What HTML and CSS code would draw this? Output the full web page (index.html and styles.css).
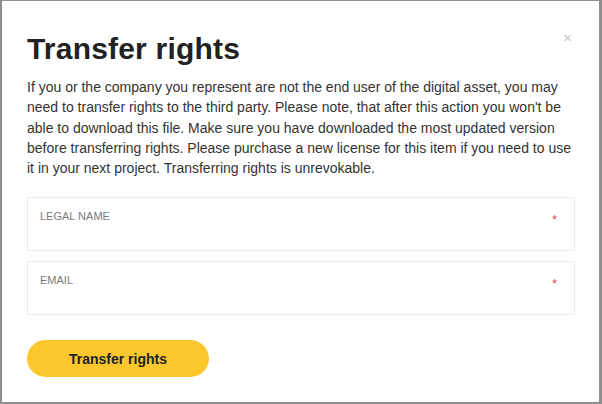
FILE: index.html
```html
<!DOCTYPE html>
<html lang="en">
<head>
  <meta charset="UTF-8">
  <title>Transfer rights</title>
  <link rel="stylesheet" href="styles.css">
</head>
<body>

  <div class="modal">
    <button class="close" aria-label="Close">&times;</button>
    <h2>Transfer rights</h2>
    <p class="intro">
      If you or the company you represent are not the end user of the digital asset, you may
      need to transfer rights to the third party. Please note, that after this action you won't be
      able to download this file. Make sure you have downloaded the most updated version
      before transferring rights. Please purchase a new license for this item if you need to use
      it in your next project. Transferring rights is unrevokable.
    </p>

    <div class="field">
      <label for="legalName">Legal name</label>
      <span class="required">*</span>
      <input id="legalName" type="text">
    </div>

    <div class="field">
      <label for="email">Email</label>
      <span class="required">*</span>
      <input id="email" type="email">
    </div>

    <button class="submit-button">Transfer rights</button>
  </div>

</body>
</html>
```

FILE: styles.css
```css
body {
  margin: 0;
  background-color: #8e8e8e;
  font-family: "Liberation Sans", Arial, sans-serif;
}

.modal {
  position: relative;
  box-sizing: border-box;
  width: 597px;
  height: 401px;
  margin: 1px 0 0 2px;
  padding: 31px 24px 0 25px;
  background-color: white;
}

.close {
  position: absolute;
  top: 29px;
  right: 27px;
  border: none;
  background: none;
  padding: 0;
  color: #c4c4c4;
  font-size: 15px;
  line-height: 1;
  cursor: pointer;
}

h2 {
  margin: 0 0 11px;
  font-size: 30px;
  font-weight: bold;
  color: #222;
  letter-spacing: 0.2px;
}

.intro {
  margin: 0 0 19px;
  font-size: 14px;
  line-height: 20.3px;
  color: #333;
}

.field {
  position: relative;
  box-sizing: border-box;
  height: 54px;
  margin-bottom: 10px;
  border: 1px solid #ececec;
  padding: 12px 12px 0;
}

.field label {
  display: block;
  font-size: 11px;
  text-transform: uppercase;
  color: #7a7a7a;
}

.field input {
  width: 100%;
  border: none;
  outline: none;
  padding: 4px 0;
  font-size: 14px;
}

.required {
  position: absolute;
  top: 14px;
  right: 17px;
  color: #d9534f;
  font-size: 13px;
}

.submit-button {
  margin-top: 15px;
  width: 182px;
  height: 37px;
  border: none;
  border-radius: 19px;
  background-color: #fcc72d;
  color: #222;
  font-family: "Liberation Sans", Arial, sans-serif;
  font-size: 14px;
  font-weight: bold;
  cursor: pointer;
}
```
